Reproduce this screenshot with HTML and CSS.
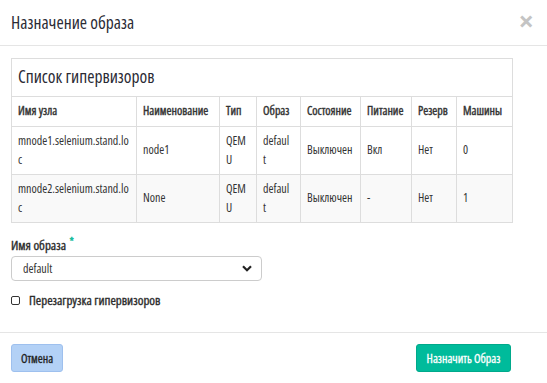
FILE: index.html
```html
<!DOCTYPE html>
<html lang="ru">
<head>
<meta charset="utf-8">
<link rel="stylesheet" href="styles.css">
</head>
<body>
<div class="modal">
  <div class="modal-header">
    <h3 class="modal-title">Назначение образа</h3>
    <span class="close">&times;</span>
  </div>
  <div class="modal-body">
    <table class="table">
      <colgroup>
        <col class="c1"><col class="c2"><col class="c3"><col class="c4"><col class="c5"><col class="c6"><col class="c7"><col class="c8">
      </colgroup>
      <thead>
        <tr class="caption-row"><th colspan="8">Список гипервизоров</th></tr>
        <tr class="head-row">
          <th>Имя узла</th><th>Наименование</th><th>Тип</th><th>Образ</th><th>Состояние</th><th>Питание</th><th>Резерв</th><th>Машины</th>
        </tr>
      </thead>
      <tbody>
        <tr>
          <td>mnode1.selenium.stand.loc</td><td>node1</td><td>QEMU</td><td class="img">default</td><td>Выключен</td><td>Вкл</td><td>Нет</td><td>0</td>
        </tr>
        <tr class="odd">
          <td>mnode2.selenium.stand.loc</td><td>None</td><td>QEMU</td><td class="img">default</td><td>Выключен</td><td>-</td><td>Нет</td><td>1</td>
        </tr>
      </tbody>
    </table>

    <div class="form-group">
      <label class="field-label" for="image">Имя образа <span class="req">*</span></label>
      <div class="select-wrap">
        <select id="image" class="select"><option>default</option></select>
        <svg class="chevron" width="10" height="7" viewBox="0 0 10 7"><path d="M1 1.2 L5 5.2 L9 1.2" fill="none" stroke="#222" stroke-width="2.2"/></svg>
      </div>
    </div>

    <label class="check">
      <input type="checkbox" class="checkbox">
      <span>Перезагрузка гипервизоров</span>
    </label>
  </div>
  <div class="modal-footer">
    <button class="btn btn-cancel">Отмена</button>
    <button class="btn btn-primary">Назначить Образ</button>
  </div>
</div>
</body>
</html>
```
FILE: styles.css
```css
html, body {
  margin: 0;
  padding: 0;
  background: #fff;
}
body {
  font-family: "Open Sans", "DejaVu Sans", sans-serif;
  font-stretch: 75%;
  font-size: 12px;
  color: #333;
  width: 547px;
  height: 383px;
  overflow: hidden;
}
.modal {
  display: flex;
  flex-direction: column;
  height: 383px;
}
.modal-header {
  height: 46px;
  border-bottom: 1px solid #e5e5e5;
  display: flex;
  align-items: center;
  justify-content: space-between;
  padding: 0 13px 0 11px;
  box-sizing: border-box;
  flex: none;
}
.modal-title {
  margin: 0;
  font-size: 17.5px;
  font-weight: 400;
  color: #2b2b35;
  padding-bottom: 1px;
}
.close {
  font-size: 27px;
  font-weight: 700;
  color: #c4c4c4;
  line-height: 1;
  font-stretch: 100%;
  padding-bottom: 4px;
}
.modal-body {
  padding: 12px 36px 0 11px;
  flex: 1;
}
.table {
  width: 501px;
  border-collapse: collapse;
  table-layout: fixed;
  border: 1px solid #ddd;
}
.c1 { width: 125px; }
.c2 { width: 83px; }
.c3 { width: 37px; }
.c4 { width: 44px; }
.c5 { width: 60px; }
.c6 { width: 51px; }
.c7 { width: 45px; }
.c8 { width: 56px; }
.table th, .table td {
  border: 1px solid #ddd;
  padding: 5px 6px;
  text-align: left;
  vertical-align: middle;
  line-height: 18.5px;
  word-break: break-all;
}
.table td.img {
  padding-right: 9px;
}
.caption-row th {
  font-size: 17.5px;
  font-weight: 400;
  color: #2b2b35;
  height: 27px;
  padding-top: 4px;
  padding-bottom: 6px;
}
.head-row th {
  font-weight: 400;
  -webkit-text-stroke: 0.4px #333;
  font-size: 12px;
  color: #333;
  height: 19px;
  white-space: nowrap;
}
.table td {
  height: 36px;
}
.table tr.odd td {
  background: #f9f9f9;
}
.form-group {
  margin-top: 13px;
}
.field-label {
  display: block;
  font-weight: 400;
  -webkit-text-stroke: 0.35px #2b2b2b;
  font-size: 13px;
  color: #2b2b2b;
  line-height: 18px;
  margin-bottom: 2px;
}
.req {
  color: #1abc9c;
  -webkit-text-stroke: 0.6px #1abc9c;
  font-size: 11px;
  vertical-align: top;
  position: relative;
  top: -4px;
  left: 1px;
}
.select-wrap {
  position: relative;
  width: 251px;
}
.select {
  appearance: none;
  -webkit-appearance: none;
  width: 251px;
  height: 25px;
  border: 1px solid #ccc;
  border-radius: 4px;
  background: #fff;
  padding: 0 11px;
  font-family: inherit;
  font-stretch: 75%;
  font-size: 12px;
  color: #333;
}
.chevron {
  position: absolute;
  right: 10px;
  top: 9px;
  pointer-events: none;
}
.check {
  display: flex;
  align-items: center;
  gap: 9px;
  margin-top: 10px;
  font-weight: 400;
  -webkit-text-stroke: 0.35px #2b2b2b;
  font-size: 13px;
  color: #2b2b2b;
}
.checkbox {
  appearance: none;
  -webkit-appearance: none;
  width: 9px;
  height: 9px;
  margin: 0;
  border: 1.3px solid #333;
  border-radius: 2px;
  background: #fff;
  -webkit-text-stroke: 0;
}
.modal-footer {
  border-top: 1px solid #e5e5e5;
  padding: 11px 36px 11px 11px;
  display: flex;
  justify-content: space-between;
  align-items: center;
  flex: none;
}
.btn {
  height: 28px;
  border-radius: 3px;
  font-family: inherit;
  font-stretch: 75%;
  font-size: 12px;
  font-weight: 400;
  -webkit-text-stroke: 0.3px currentColor;
  padding: 0;
  white-space: nowrap;
  cursor: pointer;
}
.btn-cancel {
  background: #b3d1f6;
  border: 1px solid #9ec0ee;
  color: #222;
  width: 52px;
}
.btn-primary {
  background: #00bb9b;
  border: 1px solid #00a98b;
  color: #fff;
  width: 95px;
}
```
